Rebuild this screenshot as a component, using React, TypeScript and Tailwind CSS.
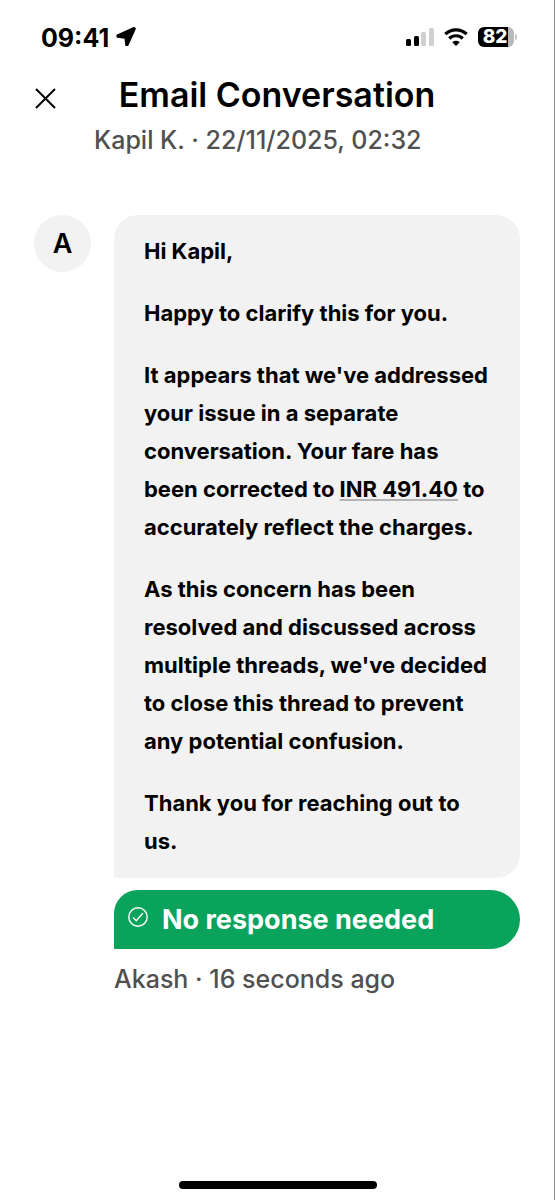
import type { ReactNode } from "react";

type Message = {
  initial: string;
  paragraphs: ReactNode[];
  status: string;
  meta: string;
};

const message: Message = {
  initial: "A",
  paragraphs: [
    "Hi Kapil,",
    "Happy to clarify this for you.",
    <>
      It appears that we've addressed
      <br />
      your issue in a separate
      <br />
      conversation. Your fare has
      <br />
      been corrected to{" "}
      <a
        href="#fare"
        className="underline decoration-[#b4b4b4] decoration-2 underline-offset-2"
      >
        INR 491.40
      </a>{" "}
      to
      <br />
      accurately reflect the charges.
    </>,
    <>
      As this concern has been
      <br />
      resolved and discussed across
      <br />
      multiple threads, we've decided
      <br />
      to close this thread to prevent
      <br />
      any potential confusion.
    </>,
    <>
      Thank you for reaching out to
      <br />
      us.
    </>,
  ],
  status: "No response needed",
  meta: "Akash · 16 seconds ago",
};

function StatusBar() {
  return (
    <div className="flex h-[74px] items-center justify-between pr-[37px] pl-[41px]">
      <div className="flex items-center gap-[7px] text-[25px] leading-[38px] font-bold">
        <span className="pt-[2px]">09:41</span>
        <svg width="20" height="20" viewBox="0 0 20 20" aria-hidden="true">
          <path
            d="M1.500 8.500 18 1 18.800 1.800 11.500 18 10.300 18 9.300 10.700 1.500 9.800Z"
            fill="#000"
            stroke="#000"
            strokeWidth="2"
            strokeLinejoin="round"
          />
        </svg>
      </div>
      <div className="flex items-center">
        <svg width="28" height="18" viewBox="0 0 28 18" aria-hidden="true">
          <rect x="0" y="11" width="5" height="7" rx="1.500" fill="#000" />
          <rect x="8" y="8" width="5" height="10" rx="1.500" fill="#000" />
          <rect x="15" y="4" width="5" height="14" rx="1.500" fill="#d0d0d0" />
          <rect x="23" y="0" width="5" height="18" rx="1.500" fill="#d0d0d0" />
        </svg>
        <svg className="ml-[10px]" width="24" height="18" viewBox="0 0 24 18" aria-hidden="true">
          <path d="M1.300 6.200a15.400 15.400 0 0 1 21.400 0" fill="none" stroke="#000" strokeWidth="3.200" />
          <path d="M5.200 10.500a9.800 9.800 0 0 1 13.600 0" fill="none" stroke="#000" strokeWidth="3.200" />
          <path d="M8.300 14.200a5.400 5.400 0 0 1 7.400 0L12 18Z" fill="#000" />
        </svg>
        <div className="ml-[10px] flex items-center gap-px">
          <div className="flex h-5 w-9 items-center justify-center rounded-md bg-linear-to-r from-black from-83% to-[#b8b8b8] to-83% pr-[2px] text-[19px] leading-5 font-extrabold text-white">
            82
          </div>
          <div className="h-[6px] w-[2px] rounded-r-full bg-[#c4c4c4]" />
        </div>
      </div>
    </div>
  );
}

function Header() {
  return (
    <header className="relative">
      <button type="button" aria-label="Close" className="absolute top-[14px] left-[35px]">
        <svg width="21" height="21" viewBox="0 0 21 21" aria-hidden="true">
          <path d="m1 1 19 19M20 1 1 20" fill="none" stroke="#000" strokeWidth="2" />
        </svg>
      </button>
      <h1 className="text-center text-[34px] leading-[42px] font-semibold">Email Conversation</h1>
      <p className="pl-[94px] text-[25px] leading-[48px] font-medium text-[#505050]">
        Kapil K. · 22/11/2025, 02:32
      </p>
    </header>
  );
}

export default function App() {
  return (
    <div className="flex min-h-screen flex-col border-r border-[#8e8e8e] bg-white font-['Inter',sans-serif] text-black">
      <StatusBar />
      <Header />
      <main className="flex flex-1 items-start gap-[23px] pt-[51px] pr-[34px] pl-[34px]">
        <div className="flex size-[57px] shrink-0 items-center justify-center rounded-full bg-[#f2f2f2] pt-[2px] text-[27px] font-semibold">
          {message.initial}
        </div>
        <div className="min-w-0 flex-1">
          <div className="space-y-6 rounded-3xl rounded-bl-none bg-[#f2f2f2] pt-[17px] pb-[18px] pl-[30px] text-[22px] leading-[38px] font-bold whitespace-nowrap">
            {message.paragraphs.map((p, i) => (
              <p key={i}>{p}</p>
            ))}
          </div>
          <div className="mt-3 flex h-[59px] items-center gap-[14px] rounded-tl-3xl rounded-r-[30px] bg-[#0aa35b] pl-[14px] text-[27px] font-bold text-white">
            <svg width="20" height="20" viewBox="0 0 20 20" aria-hidden="true" className="mb-[6px]">
              <circle cx="10" cy="10" r="9.200" fill="none" stroke="#fff" strokeWidth="1.400" />
              <path d="m5 10.500 3.300 3.200L15 6" fill="none" stroke="#fff" strokeWidth="1.400" />
            </svg>
            <span className="pt-[2px]">{message.status}</span>
          </div>
          <p className="text-[25px] leading-[60px] font-medium text-[#505050]">{message.meta}</p>
        </div>
      </main>
      <div className="mb-[11px] ml-[179px] h-[8px] w-[198px] rounded-full bg-black" />
    </div>
  );
}
